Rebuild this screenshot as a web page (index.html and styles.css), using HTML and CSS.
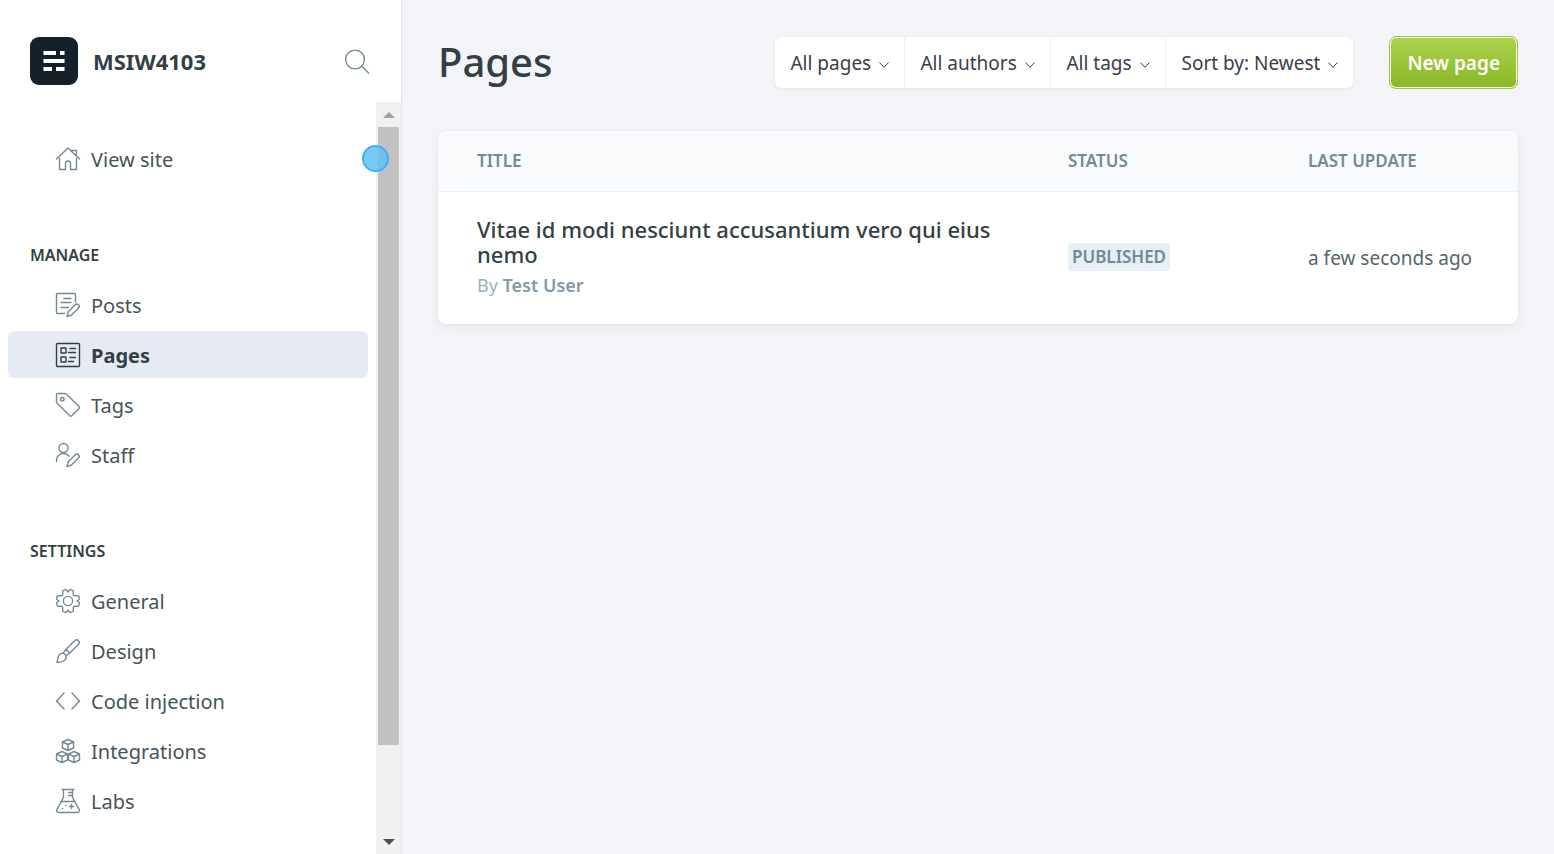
FILE: index.html
```html
<!DOCTYPE html>
<html lang="en">
<head>
<meta charset="utf-8">
<title>Pages - MSIW4103</title>
<link rel="stylesheet" href="styles.css">
</head>
<body>
<div class="app">
  <aside class="sidebar">
    <header class="brand">
      <svg class="brand-logo" viewBox="0 0 48 48" aria-hidden="true">
        <rect width="48" height="48" rx="9" fill="#15212a"/>
        <g fill="#fff"><rect x="13.500" y="14" width="12.500" height="4"/><rect x="30" y="14" width="4.500" height="4"/><rect x="13.500" y="22" width="21" height="4"/><rect x="13.500" y="30" width="8.500" height="4"/><rect x="26" y="30" width="8.500" height="4"/></g>
      </svg>
      <span class="brand-name">MSIW4103</span>
      <button class="search" type="button" aria-label="Search">
        <svg class="icon" viewBox="0 0 24 24"><circle cx="10" cy="10.500" r="9.400"/><path d="M16.700 17.200 23.600 24"/></svg>
      </button>
    </header>
    <div class="scroll">
      <nav class="nav">
        <ul class="nav-list">
          <li><a class="nav-link" href="#site"><svg class="icon" viewBox="0 0 24 24"><path d="M.5 12 12 1l11.500 11M3.500 11.500V22.500h6v-6a2.500 2.500 0 0 1 5 0v6h6v-11M15.500 3.500h5v5.500"/></svg>View site</a></li>
        </ul>
        <h2 class="nav-title">Manage</h2>
        <ul class="nav-list">
          <li><a class="nav-link" href="#posts"><svg class="icon" viewBox="0 0 24 24"><path d="M8.500 20.500h-7a1 1 0 0 1-1-1v-18a1 1 0 0 1 1-1h17a1 1 0 0 1 1 1V9M8 5.500h7M5 9.500h10M5 14.500h7.500M11 23.500l1.300-4.700 7-7a2.200 2.200 0 0 1 3.200 3.200l-7 7z"/></svg>Posts</a></li>
          <li><a class="nav-link nav-link-active" href="#pages" aria-current="page"><svg class="icon" viewBox="0 0 24 24"><rect x=".5" y=".5" width="23" height="23" rx="1"/><path d="M5 5h5v5H5zM5 14h5v5H5zM14 5.500h5.500M12.500 9.500h7M14 14.500h5.500M12.500 18.500h5"/></svg>Pages</a></li>
          <li><a class="nav-link" href="#tags"><svg class="icon" viewBox="0 0 24 24"><path d="M.5 1.500v7.300a2 2 0 0 0 .6 1.400l12.700 12.600a1.300 1.300 0 0 0 1.900 0l7.300-7.300a1.300 1.300 0 0 0 0-1.900L10.300 1.100A2 2 0 0 0 8.900.5H1.500a1 1 0 0 0-1 1z"/><circle cx="6.300" cy="6.300" r="1.800"/></svg>Tags</a></li>
          <li><a class="nav-link" href="#staff"><svg class="icon" viewBox="0 0 24 24"><circle cx="7.500" cy="5" r="4.500"/><path d="M.5 18.500v-1A7 7 0 0 1 13 13.200M11 23.500l1.300-4.700 7-7a2.200 2.200 0 0 1 3.200 3.200l-7 7z"/></svg>Staff</a></li>
        </ul>
        <h2 class="nav-title">Settings</h2>
        <ul class="nav-list">
          <li><a class="nav-link" href="#general"><svg class="icon" viewBox="0 0 24 24"><circle cx="12" cy="12" r="4.600"/><path id="gear-quarter" d="M12 2.800 13.600 1q.5-.6 1.200-.4l1.800.7q.7.3.7 1V5.200q0 1.500 1.500 1.500H21.700q.7 0 1 .7l.7 1.800q.2.7-.4 1.200L21.200 12"/><use href="#gear-quarter" transform="rotate(90 12 12)"/><use href="#gear-quarter" transform="rotate(180 12 12)"/><use href="#gear-quarter" transform="rotate(270 12 12)"/></svg>General</a></li>
          <li><a class="nav-link" href="#design"><svg class="icon" viewBox="0 0 24 24"><path d="M.8 23.400c1.400-1.700.6-4.600 2.100-7.200a4 4 0 0 1 5.700-1.200 4 4 0 0 1 .4 5.900c-2 2.300-5.100 2.500-8.200 2.500zM7.200 14.200l2.300-3.400 9.300-9.300a2.700 2.700 0 0 1 3.800 3.800l-9.300 9.200-3.600 2.300M9.500 10.800c1.900.5 3.200 1.700 3.800 3.700"/></svg>Design</a></li>
          <li><a class="nav-link" href="#code"><svg class="icon" viewBox="0 0 24 24"><path d="M8 4 .5 12 8 20M16 4l7.500 8-7.500 8"/></svg>Code injection</a></li>
          <li><a class="nav-link" href="#integrations"><svg class="icon" viewBox="0 0 24 24"><path d="M12 .5 17.500 3v6L12 11.500 6.500 9V3zM6.500 3 12 5.500 17.500 3M12 5.500v6M6 12.500l5.500 2.500v6L6 23.500.5 21v-6zM.5 15 6 17.500l5.500-2.500M6 17.500v6M18 12.500l5.500 2.500v6L18 23.500 12.500 21v-6zM12.500 15l5.500 2.500 5.500-2.500M18 17.500v6"/></svg>Integrations</a></li>
          <li><a class="nav-link" href="#labs"><svg class="icon" viewBox="0 0 24 24"><path d="M6 .5h12M7.500.5v8L.9 20.300c-.9 1.700 0 3.200 1.600 3.200h19c1.600 0 2.500-1.500 1.600-3.200L16.500 8.500v-8M4.800 12.500h14.400M12.500 3.500h4M12.500 6.500h4M15.500 15.500v4M13.500 17.500h4M9.500 16.500h.2M6.500 19.500h.2"/></svg>Labs</a></li>
        </ul>
      </nav>
      <div class="scrollbar">
        <button class="scroll-button" type="button" aria-label="Scroll up"><svg class="arrow arrow-muted" viewBox="0 0 12 6"><path d="M0 6 6 0l6 6z"/></svg></button>
        <div class="track"><div class="thumb"></div></div>
        <button class="scroll-button" type="button" aria-label="Scroll down"><svg class="arrow" viewBox="0 0 12 6"><path d="M0 0h12L6 6z"/></svg></button>
        <span class="beacon"></span>
      </div>
    </div>
  </aside>
  <main class="main">
    <header class="toolbar">
      <h1 class="page-title">Pages</h1>
      <div class="filters">
        <div class="filter"><select class="filter-select" aria-label="Page type"><option>All pages</option></select><svg class="chevron" viewBox="0 0 10 6"><path d="M.5.5 5 5.300 9.500.5"/></svg></div>
        <div class="filter"><select class="filter-select" aria-label="Author"><option>All authors</option></select><svg class="chevron" viewBox="0 0 10 6"><path d="M.5.5 5 5.300 9.500.5"/></svg></div>
        <div class="filter"><select class="filter-select" aria-label="Tag"><option>All tags</option></select><svg class="chevron" viewBox="0 0 10 6"><path d="M.5.5 5 5.300 9.500.5"/></svg></div>
        <div class="filter"><select class="filter-select" aria-label="Sort order"><option>Sort by: Newest</option></select><svg class="chevron" viewBox="0 0 10 6"><path d="M.5.5 5 5.300 9.500.5"/></svg></div>
      </div>
      <a class="new-page" href="#new">New page</a>
    </header>
    <table class="pages">
      <thead>
        <tr><th class="col-title" scope="col">Title</th><th class="col-status" scope="col">Status</th><th class="col-date" scope="col">Last update</th></tr>
      </thead>
      <tbody>
        <tr>
          <td class="col-title"><h3 class="entry-title">Vitae id modi nesciunt accusantium vero qui eius nemo</h3><p class="entry-meta">By <span class="entry-author">Test User</span></p></td>
          <td class="status"><span class="badge">Published</span></td>
          <td class="updated">a few seconds ago</td>
        </tr>
      </tbody>
    </table>
  </main>
</div>
</body>
</html>
```
FILE: styles.css
```css
* { box-sizing: border-box; }
body {
  margin: 0;
  background: #f3f4f8;
  color: #343f44;
  font-family: "Noto Sans", "Open Sans", sans-serif;
  font-size: 20px;
}
h1, h2, h3, p, ul { margin: 0; padding: 0; }
ul { list-style: none; }
a { color: inherit; text-decoration: none; }
button { padding: 0; border: 0; background: none; }

.app { display: flex; height: 100vh; }
.icon {
  width: 24px;
  height: 24px;
  flex: none;
  fill: none;
  stroke: #738a94;
  stroke-width: 1.4;
  stroke-linecap: round;
  stroke-linejoin: round;
  overflow: visible;
}

.sidebar {
  display: flex;
  flex: none;
  flex-direction: column;
  width: 402px;
  border-right: 1px solid #e3e6ed;
  background: #fff;
}
.brand {
  display: flex;
  align-items: center;
  height: 102px;
  padding: 20px 32px 0 30px;
}
.brand-logo { width: 48px; height: 48px; }
.brand-name { flex: 1; padding-left: 15px; font-size: 22px; font-weight: 700; }
.search { display: flex; }

.scroll { display: flex; flex: 1; min-height: 0; }
.nav { flex: 1; overflow: hidden; padding: 33px 8px 0; }
.nav-list { display: grid; gap: 3px; }
.nav-link {
  display: flex;
  align-items: center;
  gap: 11px;
  height: 47px;
  padding: 1px 0 0 48px;
  border-radius: 6px;
  color: #47535a;
}
.nav-link-active { background: #e5eaf3; color: #343f44; font-weight: 700; }
.nav-link-active .icon { stroke: #343f44; }
.nav-title {
  margin: 61px 0 14px;
  padding-left: 22px;
  font-size: 16px;
  font-weight: 600;
  line-height: 24px;
  text-transform: uppercase;
}

.scrollbar {
  position: relative;
  display: flex;
  flex-direction: column;
  width: 25px;
  background: #f1f1f1;
}
.scroll-button { display: grid; place-items: center; height: 25px; }
.arrow { width: 12px; height: 6px; fill: #505050; }
.arrow-muted { fill: #a3a3a3; }
.track { flex: 1; padding: 0 2px; }
.thumb { height: 88%; background: #c1c1c1; }
.beacon {
  position: absolute;
  top: 43px;
  left: -14px;
  width: 27px;
  height: 27px;
  border: 2px solid #3eb0ef;
  border-radius: 50%;
  background: rgba(98, 192, 245, .85);
}

.main { flex: 1; min-width: 0; padding: 36px; }
.toolbar { display: flex; align-items: center; margin-bottom: 42px; }
.page-title { flex: 1; padding-bottom: 2px; font-size: 40px; font-weight: 500; line-height: 48px; }
.filters {
  display: flex;
  margin-right: 36px;
  border-radius: 5px;
  background: #fff;
  box-shadow: 0 0 1px rgba(0, 0, 0, .12), 0 1px 4px rgba(0, 0, 0, .06);
}
.filter { display: grid; align-items: center; }
.filter + .filter { border-left: 1px solid #ebeef2; }
.filter > * { grid-area: 1 / 1; }
.filter-select {
  appearance: none;
  height: 51px;
  padding: 0 33px 0 15px;
  border: 0;
  background: none;
  color: #394047;
  font: inherit;
  font-size: 19px;
}
.chevron {
  justify-self: end;
  width: 10px;
  height: 6px;
  margin: 4px 15px 0 0;
  fill: none;
  stroke: #394047;
  pointer-events: none;
}
.new-page {
  padding: 1px 17px 0;
  border: 1px solid #a0ca35;
  border-radius: 7px;
  background: linear-gradient(#acd44f, #8ab624);
  box-shadow: inset 0 0 0 1px #fff;
  color: #fff;
  font-size: 19px;
  font-weight: 600;
  line-height: 50px;
}

.pages {
  width: 100%;
  border-radius: 8px;
  border-spacing: 0;
  background: #fff;
  box-shadow: 0 0 1px rgba(0, 0, 0, .15), 0 3px 12px rgba(0, 0, 0, .06);
  table-layout: fixed;
  text-align: left;
}
.pages th {
  height: 61px;
  padding: 0 0 2px;
  border-bottom: 1px solid #e5eff5;
  background: #f9fafc;
  color: #738a94;
  font-size: 17px;
  font-weight: 600;
  text-transform: uppercase;
}
.pages th:first-child { border-top-left-radius: 8px; }
.pages th:last-child { border-top-right-radius: 8px; }
.pages td { height: 132px; padding: 0; }
.pages .col-title { padding: 0 39px 2px; }
.pages .status { padding-bottom: 4px; }
.col-status { width: 240px; }
.col-date { width: 210px; }
.entry-title { font-size: 22px; font-weight: 500; line-height: 25px; }
.entry-meta { margin-top: 6px; color: #9fb1b9; font-size: 18px; line-height: 25px; }
.entry-author { color: #839ba6; font-weight: 600; }
.badge {
  display: inline-block;
  padding: 0 4px;
  border-radius: 4px;
  background: #e5eff5;
  color: #738a94;
  font-size: 17px;
  font-weight: 600;
  line-height: 28px;
  text-transform: uppercase;
}
.updated { color: #54666d; font-size: 19px; }
```
